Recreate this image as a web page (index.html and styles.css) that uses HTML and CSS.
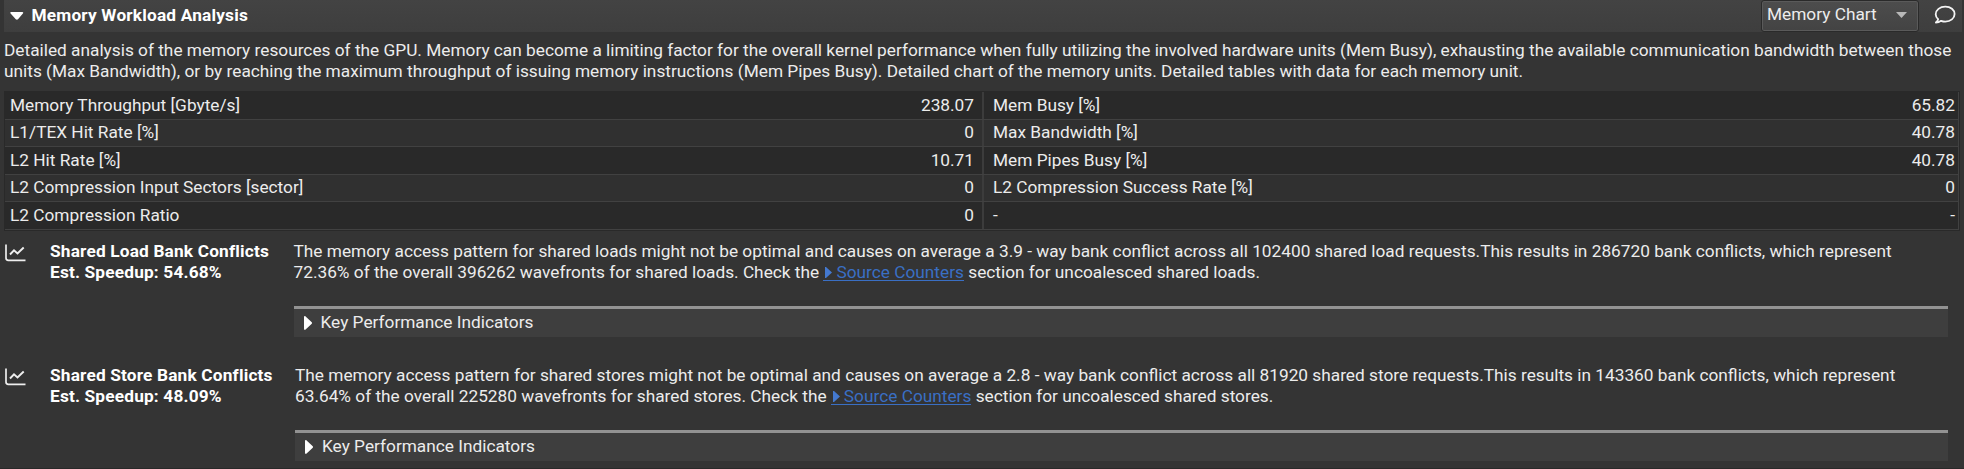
FILE: index.html
```html
<!DOCTYPE html>
<html lang="en">
<head>
<meta charset="utf-8">
<title>Memory Workload Analysis</title>
<link rel="stylesheet" href="styles.css">
</head>
<body>
<section class="section">
  <header class="header">
    <svg class="toggle" width="14" height="8" viewBox="0 0 14 8"><path d="M1.2 0h11.1c1 0 1.200.8.6 1.400L8 7.200c-.6.6-1.600.6-2.200 0L.600 1.400C0 .8.2 0 1.200 0z" fill="#fff"/></svg>
    <h1 class="title">Memory Workload Analysis</h1>
    <div class="select"><span class="select-label">Memory Chart</span><svg width="11" height="6" viewBox="0 0 11 6"><path d="M0 0h11L5.500 6z" fill="#b8b8b8"/></svg></div>
    <svg class="comment" width="22" height="20" viewBox="0 0 22 20"><path d="M4.200 14.200C2.600 12.900 1.700 11.200 1.700 9.300 1.700 5 5.900 1.600 11.300 1.600s9.300 3.300 9.300 7.500-4 7.500-9.300 7.500c-1.500 0-2.900-.3-4.200-.8-1.400 1-3.100 1.700-5.200 1.700 1.100-1 1.900-2.100 2.300-3.300z" fill="none" stroke="#f4f4f4" stroke-width="1.800" stroke-linejoin="round"/></svg>
  </header>
  <p class="description">Detailed analysis of the memory resources of the GPU. Memory can become a limiting factor for the overall kernel performance when fully utilizing the involved hardware units (Mem Busy), exhausting the available communication bandwidth between those<br>units (Max Bandwidth), or by reaching the maximum throughput of issuing memory instructions (Mem Pipes Busy). Detailed chart of the memory units. Detailed tables with data for each memory unit.</p>
  <div class="metrics">
    <div class="row"><div class="cell"><span>Memory Throughput [Gbyte/s]</span><span>238.07</span></div><div class="cell"><span>Mem Busy [%]</span><span>65.82</span></div></div>
    <div class="row"><div class="cell"><span>L1/TEX Hit Rate [%]</span><span>0</span></div><div class="cell"><span>Max Bandwidth [%]</span><span>40.78</span></div></div>
    <div class="row"><div class="cell"><span>L2 Hit Rate [%]</span><span>10.71</span></div><div class="cell"><span>Mem Pipes Busy [%]</span><span>40.78</span></div></div>
    <div class="row"><div class="cell"><span>L2 Compression Input Sectors [sector]</span><span>0</span></div><div class="cell"><span>L2 Compression Success Rate [%]</span><span>0</span></div></div>
    <div class="row"><div class="cell"><span>L2 Compression Ratio</span><span>0</span></div><div class="cell"><span>-</span><span>-</span></div></div>
  </div>
  <div class="rules">
    <article class="rule rule-load">
      <svg class="chart" width="21" height="18" viewBox="0 0 21 18"><path d="M1 .5v13.500c0 1.600.8 2.300 2.300 2.300h17.200" fill="none" stroke="#eee" stroke-width="1.700"/><path d="M5 10.500l4-4.200 3.500 3.200 6.200-6" fill="none" stroke="#eee" stroke-width="1.900"/></svg>
      <h2 class="rule-title">Shared Load Bank Conflicts<br>Est. Speedup: 54.68%</h2>
      <div class="rule-body">
        <p class="rule-text">The memory access pattern for shared loads might not be optimal and causes on average a 3.9 - way bank conflict across all 102400 shared load requests.This results in 286720 bank conflicts, which represent<br>72.36% of the overall 396262 wavefronts for shared loads. Check the <a class="link" href="#"><svg class="link-icon" width="7" height="11" viewBox="0 0 7 11"><path d="M0 0h1l6 5.500-6 5.500H0z" fill="#4479d0"/></svg>Source Counters</a> section for uncoalesced shared loads.</p>
        <div class="kpi"><svg width="9" height="14" viewBox="0 0 9 14"><path d="M0 1.200C0 0 .8-.2 1.600.500L7.500 5.900c.7.6.7 1.500 0 2.200l-5.900 5.400C.8 14.200 0 14 0 12.800z" fill="#fff"/></svg><span>Key Performance Indicators</span></div>
      </div>
    </article>
    <article class="rule rule-store">
      <svg class="chart" width="21" height="18" viewBox="0 0 21 18"><path d="M1 .5v13.500c0 1.600.8 2.300 2.300 2.300h17.200" fill="none" stroke="#eee" stroke-width="1.700"/><path d="M5 10.500l4-4.200 3.500 3.200 6.200-6" fill="none" stroke="#eee" stroke-width="1.900"/></svg>
      <h2 class="rule-title">Shared Store Bank Conflicts<br>Est. Speedup: 48.09%</h2>
      <div class="rule-body">
        <p class="rule-text">The memory access pattern for shared stores might not be optimal and causes on average a 2.8 - way bank conflict across all 81920 shared store requests.This results in 143360 bank conflicts, which represent<br>63.64% of the overall 225280 wavefronts for shared stores. Check the <a class="link" href="#"><svg class="link-icon" width="7" height="11" viewBox="0 0 7 11"><path d="M0 0h1l6 5.500-6 5.500H0z" fill="#4479d0"/></svg>Source Counters</a> section for uncoalesced shared stores.</p>
        <div class="kpi"><svg width="9" height="14" viewBox="0 0 9 14"><path d="M0 1.200C0 0 .8-.2 1.600.500L7.500 5.900c.7.6.7 1.500 0 2.200l-5.900 5.400C.8 14.200 0 14 0 12.800z" fill="#fff"/></svg><span>Key Performance Indicators</span></div>
      </div>
    </article>
  </div>
</section>
</body>
</html>
```
FILE: styles.css
```css
* { box-sizing: border-box; }
body {
  margin: 0;
  background: #343434;
  color: #ececec;
  font-family: Roboto, "Liberation Sans", sans-serif;
  font-size: 17.27px;
  line-height: 21.33px;
  overflow: hidden;
}
h1, h2, p { margin: 0; font-size: inherit; }
svg { display: block; flex: none; }
.section {
  height: 469px;
  display: flex;
  flex-direction: column;
  overflow: hidden;
  border-bottom: 1px solid #292929;
}
.section > * { flex: none; }
.header {
  height: 32px;
  margin: 0 2px 0 4px;
  padding-right: 6px;
  display: flex;
  align-items: center;
  background: linear-gradient(#434343, #3e3e3e);
}
.toggle { margin: -1px 0 0 6px; }
.title {
  margin: 0 auto 0 7.500px;
  color: #fff;
  font-weight: 700;
  letter-spacing: 0.18px;
}
.select {
  width: 158px;
  height: 32px;
  padding: 0 11px 2px 5px;
  display: flex;
  align-items: center;
  justify-content: space-between;
  border: 1px solid #2a2a2a;
  border-radius: 3px;
  box-shadow: inset 0 0 0 1px #5a5a5a;
  background: linear-gradient(#4d4d4d, #434343);
}
.comment { margin: -3px 0 0 15px; }
.description {
  height: 59px;
  padding: 8px 0 0 4px;
  white-space: nowrap;
}
.metrics {
  height: 140px;
  margin: 0 4px;
  display: grid;
  grid-template-rows: repeat(5, 1fr);
  border: 1px solid #292929;
}
.row {
  display: grid;
  grid-template-columns: 979px 1fr;
  background: #303030;
  border-bottom: 1px solid #414141;
  border-right: 1px solid #414141;
}
.row:nth-child(odd) { background: #292929; }
.cell {
  padding: 0 3px 0 5px;
  display: flex;
  align-items: center;
  justify-content: space-between;
}
.cell:first-child { padding-right: 8px; border-right: 2px solid #3c3c3c; }
.cell:last-child { padding-left: 9px; }
.rules { padding: 10px 16px 0 4px; }
.rule {
  height: 124px;
  display: grid;
  grid-template-columns: 46px 243.500px 1fr;
}
.rule-store { grid-template-columns: 46px 245px 1fr; }
.chart { margin: 3px 0 0 1px; }
.rule-title {
  color: #fff;
  font-weight: 700;
  letter-spacing: 0.17px;
  white-space: nowrap;
}
.rule-text { white-space: nowrap; }
.link {
  color: #3a6fc4;
  text-decoration: none;
  background: linear-gradient(#3a6fc4, #3a6fc4) 0 calc(100% - 1px) / 100% 1px no-repeat;
}
.link-icon { display: inline-block; margin: 0 4px 0 2px; }
.kpi {
  height: 31px;
  margin-top: 22px;
  padding-left: 10px;
  display: flex;
  align-items: center;
  gap: 8px;
  background: #3e3e3e;
  border-top: 3px solid #929292;
}
```
